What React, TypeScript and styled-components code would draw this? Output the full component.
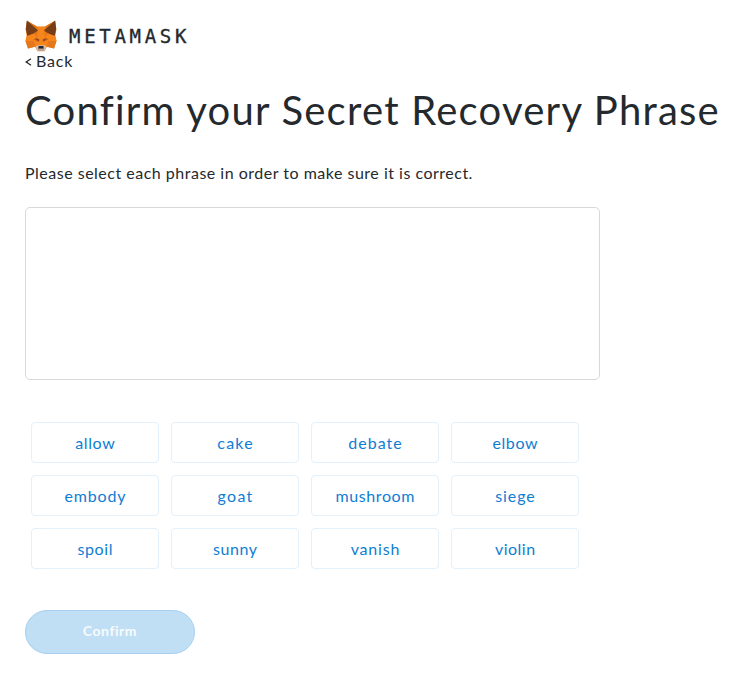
import React from "react";
import styled, { createGlobalStyle } from "styled-components";

const GlobalStyle = createGlobalStyle`
  * { box-sizing: border-box; }
  body { margin: 0; background: #fff; color: #24292e; font-family: Lato, "Open Sans", sans-serif; }
`;

const Page = styled.main`
  width: 753px;
  height: 682px;
  padding: 20px 0 0 25px;
  overflow: hidden;
`;

const Brand = styled.header`
  display: flex;
  align-items: center;
  height: 32px;
`;

const Fox = styled.svg`
  width: 32px;
  height: 32px;
  flex: none;
`;

const Wordmark = styled.span`
  margin-left: 12px;
  font: 400 19px/32px "DejaVu Sans Mono", monospace;
  letter-spacing: 3.7px;
  -webkit-text-stroke: 0.35px #24292e;
`;

const Back = styled.a`
  display: flex;
  align-items: center;
  gap: 4px;
  width: max-content;
  height: 20px;
  font-size: 16px;
  line-height: 18px;
  letter-spacing: 0.85px;
`;

const BackLabel = styled.span`
  height: 20px;
`;

const Chevron = styled.svg`
  width: 7px;
  height: 8px;
`;

const Title = styled.h1`
  margin: 8px 0 0;
  height: 60px;
  font-size: 40px;
  line-height: 60px;
  font-weight: 400;
  letter-spacing: 1.24px;
  white-space: nowrap;
`;

const Hint = styled.p`
  margin: 21px 0 0;
  height: 24px;
  font-size: 16px;
  line-height: 24px;
  letter-spacing: 0.5px;
`;

const Selection = styled.div`
  width: 575px;
  height: 173px;
  margin-top: 22px;
  border: 1px solid #d6d9dc;
  border-radius: 5px;
`;

const Words = styled.div`
  display: grid;
  grid-template-columns: repeat(4, 128px);
  grid-auto-rows: 41px;
  gap: 12px;
  margin: 42px 0 0 6px;
`;

const Word = styled.button<{ $tracking: number }>`
  padding: 1px 0 0 ${(p) => p.$tracking}px;
  border: 1px solid #e3f1fc;
  border-radius: 4px;
  background: #fff;
  color: #0f7dd3;
  font: 400 16px/20px Lato, sans-serif;
  letter-spacing: ${(p) => p.$tracking}px;
`;

const Confirm = styled.button`
  display: block;
  width: 170px;
  height: 44px;
  margin-top: 41px;
  padding: 0 0 2px;
  border: 1px solid #a6d0f1;
  border-radius: 22px;
  background: #c0dff5;
  color: #f7fbfe;
  font: 700 14px/20px Lato, sans-serif;
  letter-spacing: 0.55px;
`;

const words: [string, number][] = [
  ["allow", 0.6], ["cake", 1.2], ["debate", 1], ["elbow", 0.6],
  ["embody", 0.8], ["goat", 1.3], ["mushroom", 0.6], ["siege", 0.9],
  ["spoil", 0.6], ["sunny", 0.6], ["vanish", 0.8], ["violin", 0.5],
];

function FoxLogo() {
  return (
    <Fox viewBox="0 0 32 32" aria-hidden="true">
      <path fill="#f6851b" d="M2 .8 12 6.5h8L30 .8l1.4 8.4-1 6.3L31.5 21 29 28.5l-7-1.8-2.5 4.5h-7L10 26.7l-7 1.8L.5 21l1.1-5.5-1-6.3z" />
      <path fill="#e4761b" d="M2 .8 12 6.5l2 11-8-1.5zM30 .8 20 6.5l-2 11 8-1.5zM.5 21H9l1 5.7-7 1.8zM31.5 21H23l-1 5.7 7 1.8z" />
      <path fill="#763d16" d="M1.8.5 13.2 10.5 8.5 13.5 2.5 16.2.8 9zM30.2.5 18.8 10.5l4.7 3 6 2.7L31.2 9z" />
      <path fill="#f6851b" d="m13.2 6.5 2.8.5 2.8-.5L20 18l-2 8h-4l-2-8zM2 16l7-2.5 3 4L9 21H.5zM30 16l-7-2.5-3 4 3 3.5h8.5z" />
      <path fill="#cd6116" d="m8.5 19.5 3-2 3 2-.5 2.5zM23.5 19.5l-3-2-3 2 .5 2.5z" />
      <path fill="#47434a" d="m10.5 19.3 3.2.1.1 1.6zM21.5 19.3l-3.2.1-.1 1.6z" />
      <path fill="#d7c1b3" d="m10.5 26.5 3-1.2h5l3 1.2-2 4.5h-7z" />
      <path fill="#24292e" d="M13.7 26h4.6l.6 2.8h-5.8z" />
      <path fill="#b9a398" d="M12.6 28.8h6.8l-.6 2.2h-5.6z" />
    </Fox>
  );
}

export default function App() {
  return (
    <>
      <GlobalStyle />
      <Page>
        <Brand>
          <FoxLogo />
          <Wordmark>METAMASK</Wordmark>
        </Brand>
        <Back>
          <Chevron viewBox="0 0 7 8" aria-hidden="true">
            <path d="M6 .8 1.2 4 6 7.2" fill="none" stroke="#24292e" strokeWidth="1.3" />
          </Chevron>
          <BackLabel>Back</BackLabel>
        </Back>
        <Title>Confirm your Secret Recovery Phrase</Title>
        <Hint>Please select each phrase in order to make sure it is correct.</Hint>
        <Selection />
        <Words>
          {words.map(([word, tracking]) => (
            <Word key={word} $tracking={tracking}>{word}</Word>
          ))}
        </Words>
        <Confirm disabled>Confirm</Confirm>
      </Page>
    </>
  );
}
